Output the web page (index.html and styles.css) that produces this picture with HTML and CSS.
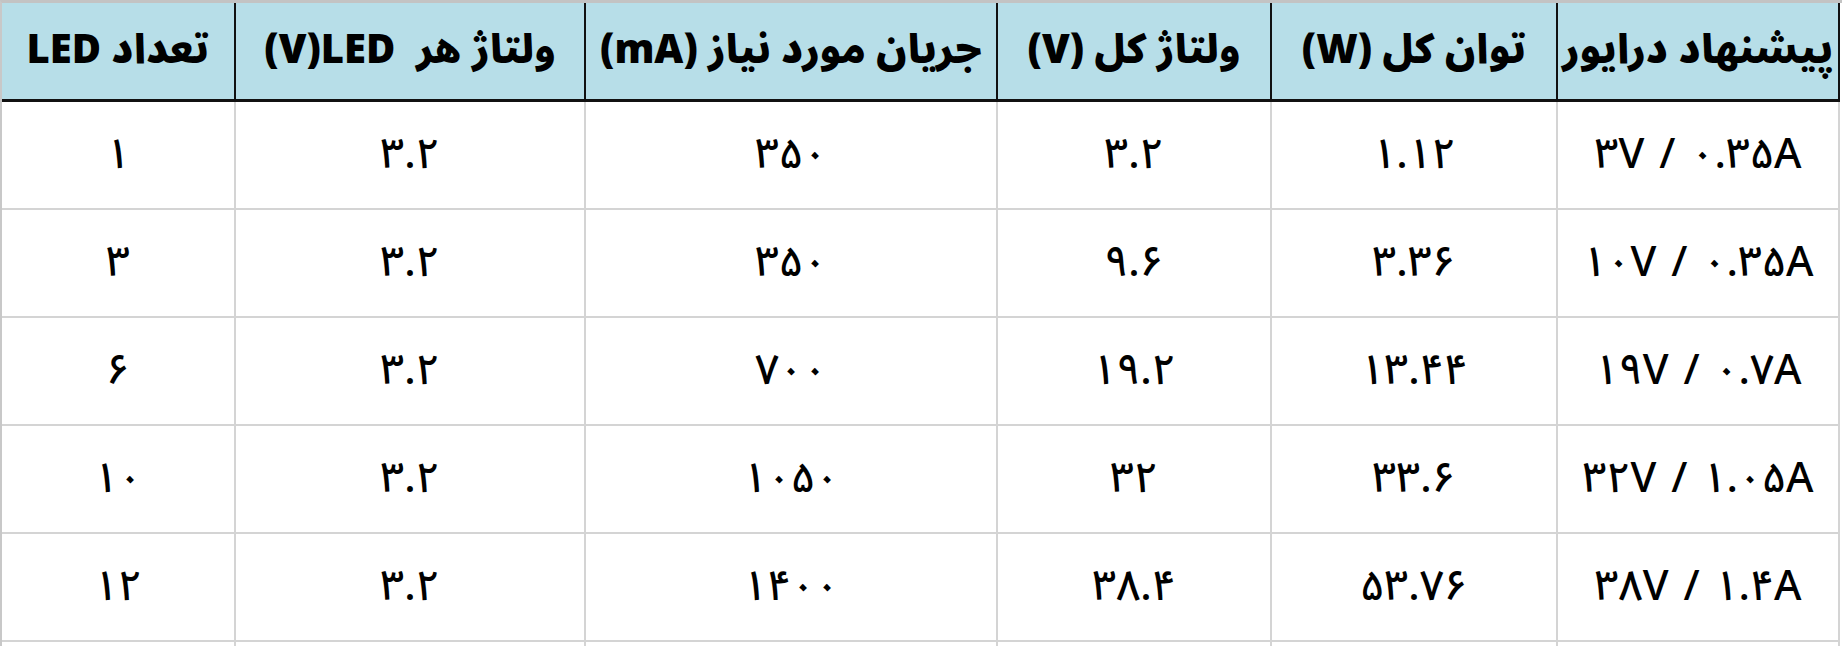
FILE: index.html
```html
<!DOCTYPE html>
<html lang="fa">
<head>
<meta charset="utf-8">
<title>جدول درایور LED</title>
<link rel="stylesheet" href="styles.css">
</head>
<body>
<div class="sheet">
<table class="grid" dir="rtl">
  <colgroup>
    <col class="c1"><col class="c2"><col class="c3"><col class="c4"><col class="c5"><col class="c6">
  </colgroup>
  <thead>
    <tr>
      <th>پیشنهاد درایور</th>
      <th>توان کل (W)</th>
      <th>ولتاژ کل (V)</th>
      <th>جریان مورد نیاز (mA)</th>
      <th>ولتاژ هر&nbsp;&nbsp;<bdi dir="ltr">(V)LED</bdi></th>
      <th>تعداد LED</th>
    </tr>
  </thead>
  <tbody>
    <tr><td><bdi dir="ltr">۳V / ۰.۳۵A</bdi></td><td>۱.۱۲</td><td>۳.۲</td><td>۳۵۰</td><td>۳.۲</td><td>۱</td></tr>
    <tr><td><bdi dir="ltr">۱۰V / ۰.۳۵A</bdi></td><td>۳.۳۶</td><td>۹.۶</td><td>۳۵۰</td><td>۳.۲</td><td>۳</td></tr>
    <tr><td><bdi dir="ltr">۱۹V / ۰.۷A</bdi></td><td>۱۳.۴۴</td><td>۱۹.۲</td><td>۷۰۰</td><td>۳.۲</td><td>۶</td></tr>
    <tr><td><bdi dir="ltr">۳۲V / ۱.۰۵A</bdi></td><td>۳۳.۶</td><td>۳۲</td><td>۱۰۵۰</td><td>۳.۲</td><td>۱۰</td></tr>
    <tr><td><bdi dir="ltr">۳۸V / ۱.۴A</bdi></td><td>۵۳.۷۶</td><td>۳۸.۴</td><td>۱۴۰۰</td><td>۳.۲</td><td>۱۲</td></tr>
    <tr class="partial"><td></td><td></td><td></td><td></td><td></td><td></td></tr>
  </tbody>
</table>
</div>
</body>
</html>
```
FILE: styles.css
```css
html, body {
  margin: 0;
  padding: 0;
  background: #ffffff;
  overflow: hidden;
}

.sheet {
  border-top: 3px solid #c3c3c3;
  border-left: 2px solid #c8c8c8;
  width: 1840px;
  height: 643px;
  overflow: hidden;
}

.grid {
  border-collapse: collapse;
  table-layout: fixed;
  width: 1837px;
  font-family: "Noto Sans Arabic", "DejaVu Sans", sans-serif;
  color: #000;
}

.c1 { width: 282px; }
.c2 { width: 286px; }
.c3 { width: 274px; }
.c4 { width: 412px; }
.c5 { width: 350px; }
.c6 { width: 233px; }

.grid th {
  background: #b7dee8;
  height: 96px;
  padding: 0;
  font-size: 40px;
  font-weight: 900;
  line-height: 1;
  text-align: center;
  vertical-align: middle;
  border-left: 2px solid #111;
  border-right: 2px solid #111;
  border-bottom: 3px solid #111;
  border-top: none;
  white-space: nowrap;
}

.grid th:last-child {
  border-left: none;
}

.grid td {
  height: 106px;
  padding: 0;
  font-size: 42px;
  font-weight: 500;
  line-height: 1;
  text-align: center;
  vertical-align: middle;
  border: 2px solid #d4d4d4;
  white-space: nowrap;
}

.grid td bdi {
  word-spacing: 4px;
}

.grid td:last-child {
  border-left: none;
}

.grid .partial td {
  height: 40px;
}
```
